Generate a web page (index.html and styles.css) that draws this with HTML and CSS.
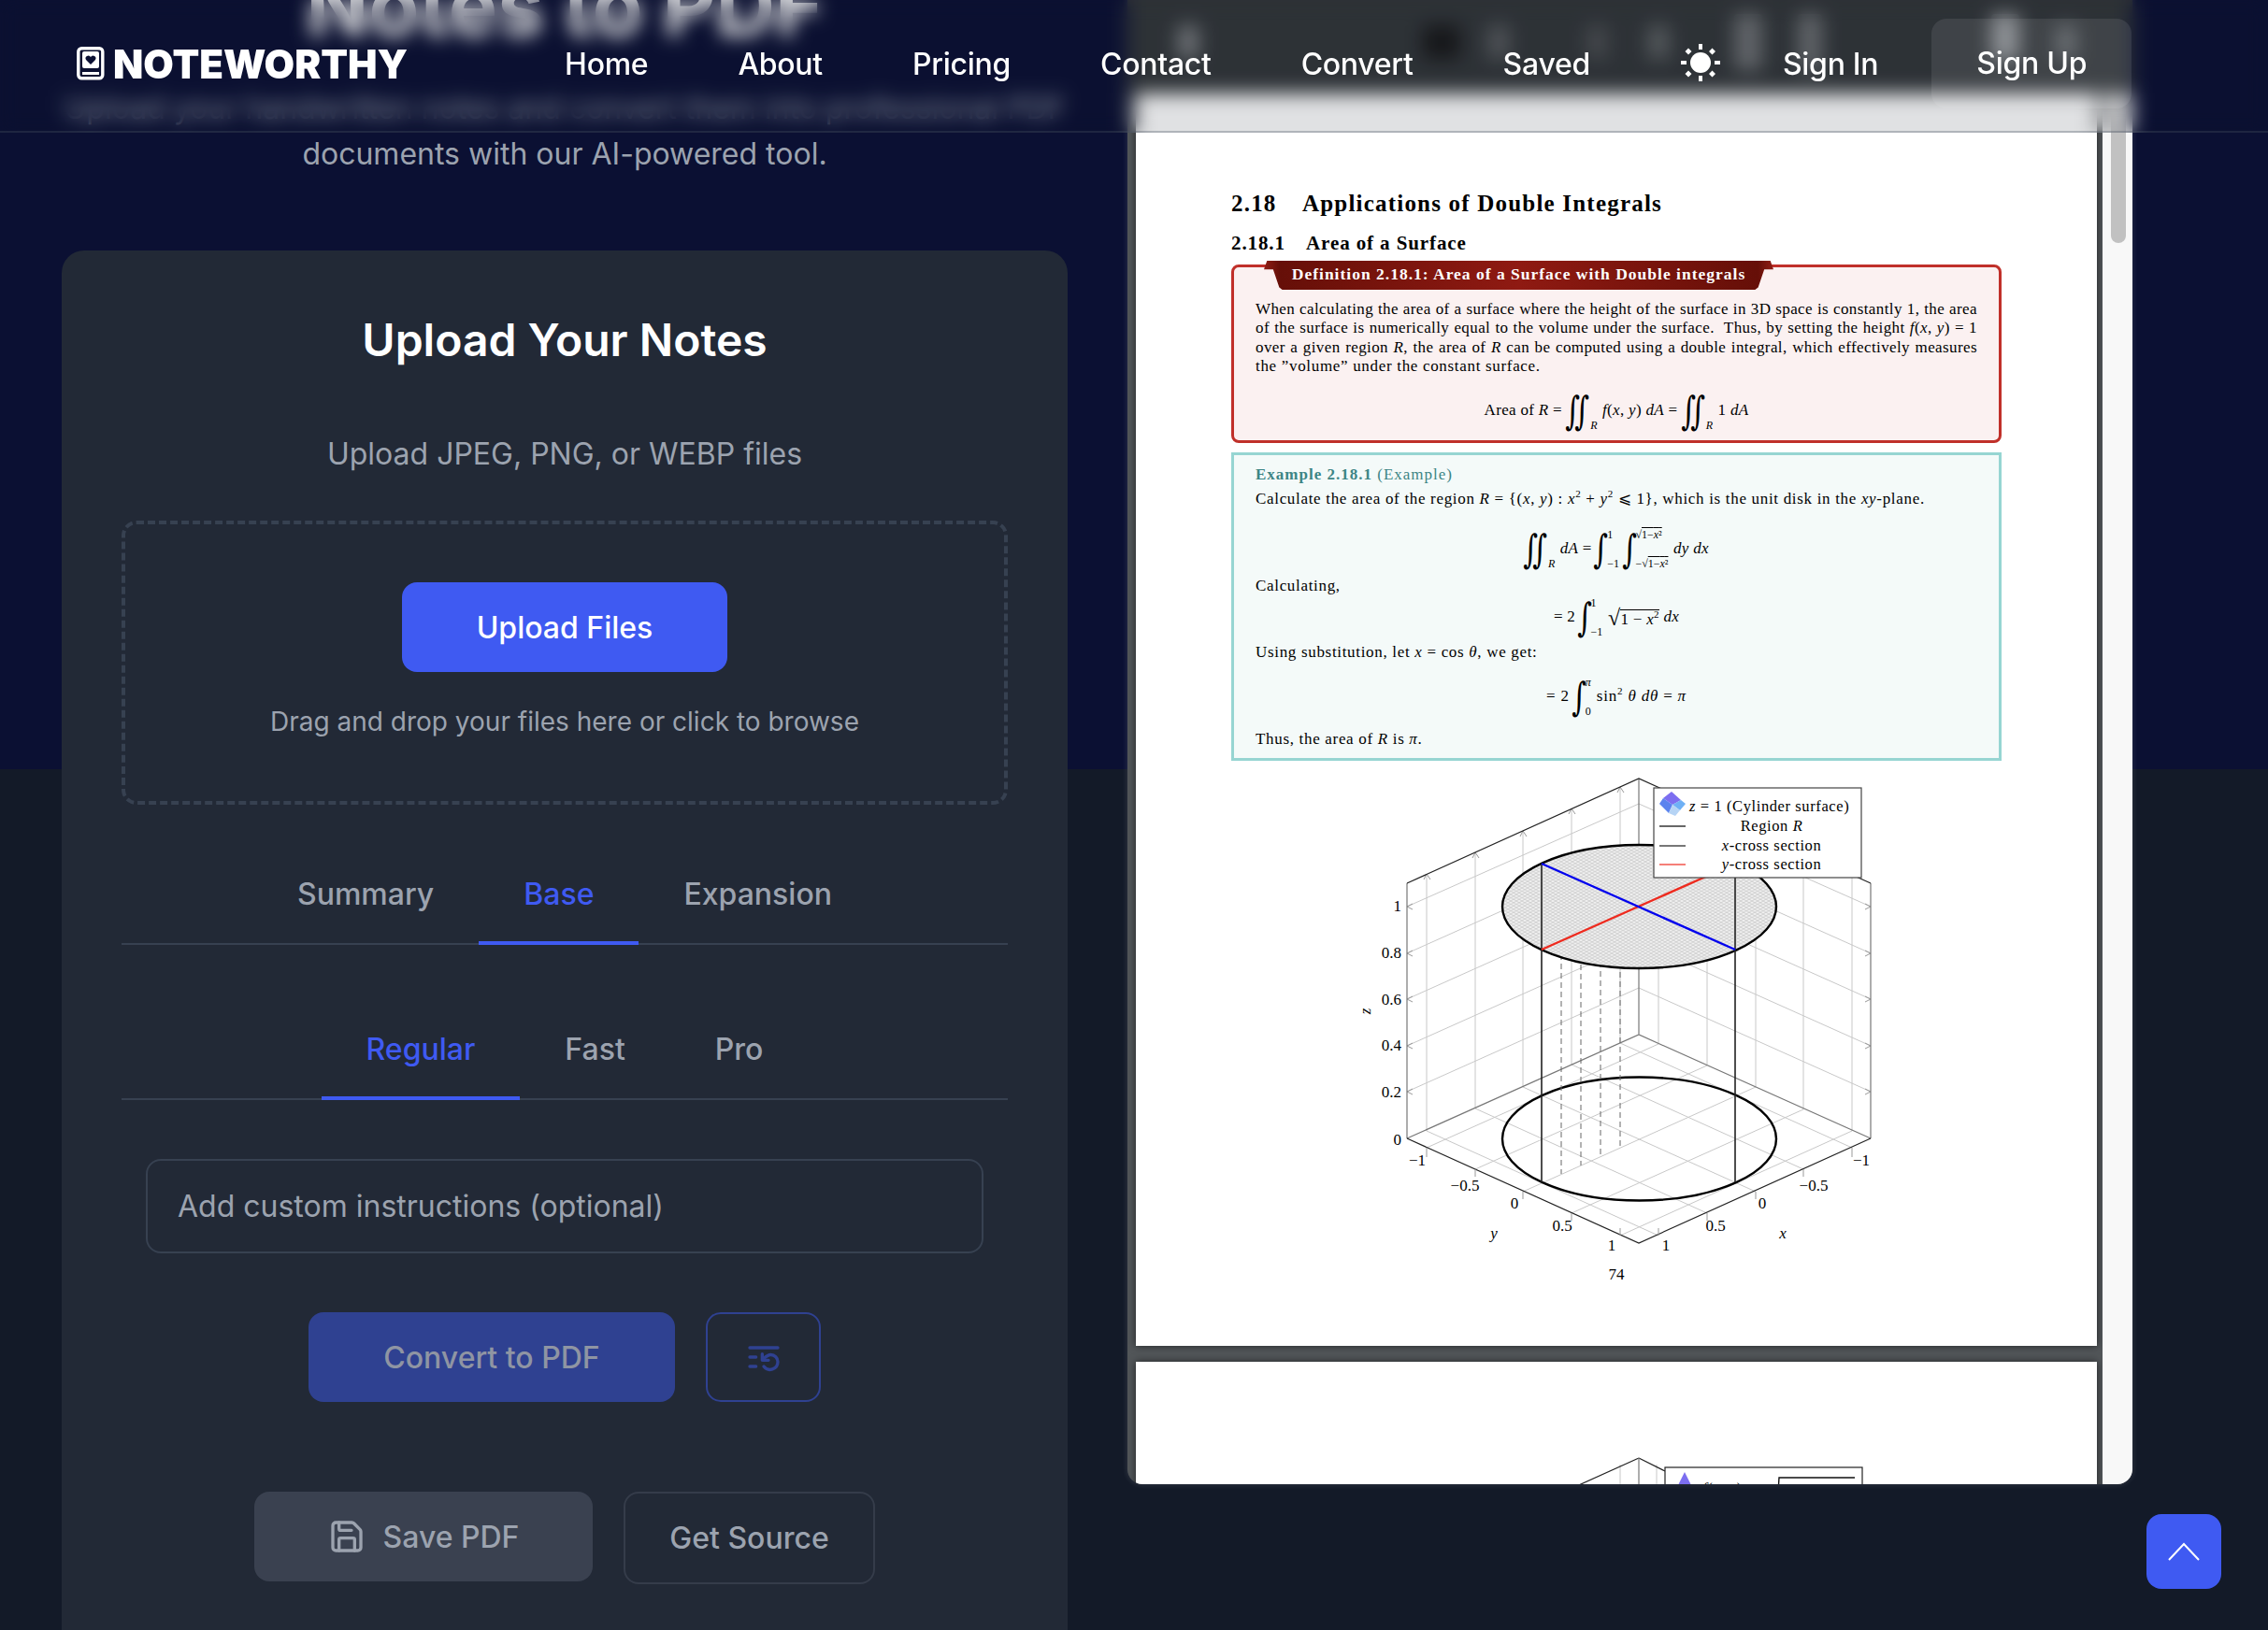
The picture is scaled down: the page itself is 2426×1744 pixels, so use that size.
FILE: index.html
```html
<!DOCTYPE html>
<html>
<head>
    <title>Noteworthy - Notes to PDF</title>
    <link rel="stylesheet" href="styles.css">
</head>
<body>
    <header class="topbar">
        <a class="logo">
            <svg class="logo-icon" viewBox="0 0 30 36">
                <rect x="1.8" y="1.8" width="26" height="32" rx="3.5" fill="none" stroke="#fff" stroke-width="3.4"/>
                <rect x="6" y="5" width="18" height="18" rx="2" fill="#fff"/>
                <path d="M15 19l-5-5a2.9 2.9 0 0 1 5-3 2.9 2.9 0 0 1 5 3z" fill="#0b1033"/>
                <rect x="6" y="27" width="18" height="3" fill="#fff"/>
            </svg>
            <span>NOTEWORTHY</span>
        </a>
        <nav class="nav">
            <a>Home</a>
            <a>About</a>
            <a>Pricing</a>
            <a>Contact</a>
            <a>Convert</a>
            <a>Saved</a>
            <svg class="sun" viewBox="0 0 44 44">
                <circle cx="22" cy="21" r="11" fill="#fff"/>
                <path d="M22 1v6M22 35v6M1 21h6M37 21h6" stroke="#fff" stroke-width="4"/>
                <path d="M9 5.500l3.500 3.500L9 12.500 5.500 9zM34.500 5.500L38 9l-3.500 3.500L31 9zM9 29.500l3.500 3.500L9 36.500 5.500 33zM34.500 29.500L38 33l-3.500 3.500L31 33z" fill="#fff"/>
            </svg>
            <a>Sign In</a>
            <a class="signup">Sign Up</a>
        </nav>
    </header>

    <main class="layout">
        <section class="left">
            <h1>Notes to PDF</h1>
            <p class="lead">Upload your handwritten notes and convert them into professional PDF<br>documents with our AI-powered tool.</p>

            <div class="card">
                <h2>Upload Your Notes</h2>
                <p class="card-sub">Upload JPEG, PNG, or WEBP files</p>

                <div class="dropzone">
                    <button class="btn btn-upload">Upload Files</button>
                    <p>Drag and drop your files here or click to browse</p>
                </div>

                <div class="tabs tabs-first">
                    <a>Summary</a>
                    <a class="active">Base</a>
                    <a>Expansion</a>
                </div>

                <div class="tabs tabs-second">
                    <a class="active">Regular</a>
                    <a>Fast</a>
                    <a>Pro</a>
                </div>

                <input class="custom" type="text" placeholder="Add custom instructions (optional)">

                <div class="actions actions-convert">
                    <button class="btn btn-convert">Convert to PDF</button>
                    <button class="btn btn-history">
                        <svg class="icon" viewBox="0 0 24 24">
                            <path d="M21 6H3"/><path d="M7 12H3"/><path d="M7 18H3"/>
                            <path d="M12 18a5 5 0 0 0 9-3 4.500 4.500 0 0 0-4.500-4.500c-1.660 0-3 1-4.500 2.500"/>
                            <path d="M11 10v4h4"/>
                        </svg>
                    </button>
                </div>

                <div class="actions actions-save">
                    <button class="btn btn-save">
                        <svg class="icon" viewBox="0 0 24 24">
                            <path d="M15.200 3a2 2 0 0 1 1.400.6l3.800 3.800a2 2 0 0 1 .6 1.400V19a2 2 0 0 1-2 2H5a2 2 0 0 1-2-2V5a2 2 0 0 1 2-2z"/>
                            <path d="M17 21v-7a1 1 0 0 0-1-1H8a1 1 0 0 0-1 1v7"/>
                            <path d="M7 3v4a1 1 0 0 0 1 1h7"/>
                        </svg>
                        Save PDF
                    </button>
                    <button class="btn btn-source">Get Source</button>
                </div>
            </div>
        </section>

        <section class="viewer">
            <div class="toolbar">
                <i class="tool tool-menu"></i>
                <i class="tool tool-input"></i>
                <i class="tool tool-a"></i>
                <i class="tool tool-b"></i>
                <i class="tool tool-c"></i>
                <i class="tool tool-d"></i>
                <i class="tool tool-e"></i>
                <i class="tool tool-f"></i>
                <i class="tool tool-g"></i>
            </div>
            <div class="viewer-body">
                <div class="pages">
                    <article class="pdf-page">
                        <h3 class="sec"><span>2.18</span>Applications of Double Integrals</h3>
                        <h4 class="subsec"><span>2.18.1</span>Area of a Surface</h4>

                        <div class="defbox">
                            <div class="deftab">Definition 2.18.1: Area of a Surface with Double integrals</div>
                            <p class="just">When calculating the area of a surface where the height of the surface in 3D space is constantly 1, the area</p>
                            <p class="just">of the surface is numerically equal to the volume under the surface.&nbsp; Thus, by setting the height <i>f</i>(<i>x</i>, <i>y</i>) = 1</p>
                            <p class="just">over a given region <i>R</i>, the area of <i>R</i> can be computed using a double integral, which effectively measures</p>
                            <p class="spaced">the ”volume” under the constant surface.</p>
                            <div class="formula f-def">
                                Area of <i>R</i> =
                                <span class="int">∬</span><span class="lim"><span></span><span><i>R</i></span></span>
                                <i>f</i>(<i>x</i>, <i>y</i>) <i>dA</i> =
                                <span class="int">∬</span><span class="lim"><span></span><span><i>R</i></span></span>
                                1 <i>dA</i>
                            </div>
                        </div>

                        <div class="exbox">
                            <p class="ex-head"><b>Example 2.18.1</b> (Example)</p>
                            <p class="ex-line spaced">Calculate the area of the region <i>R</i> = {(<i>x</i>, <i>y</i>) : <i>x</i><sup>2</sup> + <i>y</i><sup>2</sup> ⩽ 1}, which is the unit disk in the <i>xy</i>-plane.</p>
                            <div class="formula f-one">
                                <span class="int">∬</span><span class="lim"><span></span><span><i>R</i></span></span>
                                <i>dA</i> =
                                <span class="int">∫</span><span class="lim"><span>1</span><span>−1</span></span>
                                <span class="int">∫</span><span class="lim"><span>√<u>1−<i>x</i>²</u></span><span>−√<u>1−<i>x</i>²</u></span></span>
                                <i>dy dx</i>
                            </div>
                            <p class="spaced">Calculating,</p>
                            <div class="formula f-two">
                                = 2
                                <span class="int">∫</span><span class="lim"><span>1</span><span>−1</span></span>
                                <span class="root">√<span>1 − <i>x</i><sup>2</sup></span></span>
                                <i>dx</i>
                            </div>
                            <p class="ex-using spaced">Using substitution, let <i>x</i> = cos <i>θ</i>, we get:</p>
                            <div class="formula f-three">
                                = 2
                                <span class="int">∫</span><span class="lim"><span><i>π</i></span><span>0</span></span>
                                sin<sup>2</sup> <i>θ dθ</i> = <i>π</i>
                            </div>
                            <p class="ex-last spaced">Thus, the area of <i>R</i> is <i>π</i>.</p>
                        </div>

                        <svg class="chart" width="640" height="570" viewBox="0 10 640 570">
                            <defs>
                                <pattern id="mesh" width="6" height="3.500" patternUnits="userSpaceOnUse">
                                    <rect width="6" height="3.500" fill="#f0f0f0"/>
                                    <path d="M0 0l6 3.500M6 0L0 3.500" stroke="#b8b8b8" stroke-width=".6"/>
                                </pattern>
                            </defs>

                            <!-- grid -->
                            <path class="grid" d="M126 418L374 307M178 441L426 330M229 465L478 353M281 488L529 377M333 512L581 400
                                M374 512L126 400M426 488L178 376M478 465L229 353M529 441L281 329M581 418L333 306
                                M126 400V125M178 376V102M229 353V79M281 329V55M333 306V32
                                M374 306V32M426 329V55M478 353V79M529 377V102M581 400V125
                                M105 358L353 247L601 358M105 309L353 198L601 309M105 259L353 148L601 259M105 210L353 99L601 210M105 160L353 50L601 160"/>
                            <path class="ticks" d="M105 358l6-3M105 358l6 3M105 309l6-3M105 309l6 3M105 259l6-3M105 259l6 3M105 210l6-3M105 210l6 3M105 160l6-3M105 160l6 3
                                M601 358l-6-3M601 358l-6 3M601 309l-6-3M601 309l-6 3M601 259l-6-3M601 259l-6 3M601 210l-6-3M601 210l-6 3M601 160l-6-3M601 160l-6 3
                                M126 125l-3 6M126 125l4 6M178 102l-3 6M178 102l4 6M229 79l-3 6M229 79l4 6M281 55l-3 6M281 55l4 6M333 32l-3 6M333 32l4 6"/>
                            <path class="box-back" d="M105 408L353 297L601 408M353 297V23M105 135V408M601 135V408"/>
                            <path class="box-front" d="M105 135L353 23L601 135M105 408L353 520L601 408"/>
                            <path class="ticks" d="M126 418v10M178 441v8M229 465v8M281 488v8M333 512v-8M374 512v-8M426 488v8M478 465v8M529 441v8M581 418v10"/>

                            <!-- bottom circle and cylinder -->
                            <ellipse cx="353.500" cy="408.500" rx="146.500" ry="66" fill="none" stroke="#000" stroke-width="2.400"/>
                            <path class="dash" d="M270 211V446M291 202V437M312 189V428M333 170V418"/>
                            <ellipse cx="353.500" cy="160" rx="146.500" ry="66" fill="url(#mesh)" stroke="#000" stroke-width="2.400"/>
                            <path class="wall" d="M249 114V455M456 114V455"/>
                            <path d="M249 206L456 114" stroke="#ee2b1f" stroke-width="2.400"/>
                            <path d="M249 114L456 206" stroke="#0000ee" stroke-width="2.400"/>

                            <!-- axis numbers -->
                            <g class="axis">
                                <text x="99" y="165" text-anchor="end">1</text>
                                <text x="99" y="215" text-anchor="end">0.8</text>
                                <text x="99" y="265" text-anchor="end">0.6</text>
                                <text x="99" y="314" text-anchor="end">0.4</text>
                                <text x="99" y="364" text-anchor="end">0.2</text>
                                <text x="99" y="415" text-anchor="end">0</text>
                                <text x="116" y="437" text-anchor="middle">−1</text>
                                <text x="167" y="464" text-anchor="middle">−0.5</text>
                                <text x="220" y="483" text-anchor="middle">0</text>
                                <text x="271" y="507" text-anchor="middle">0.5</text>
                                <text x="324" y="528" text-anchor="middle">1</text>
                                <text x="382" y="528" text-anchor="middle">1</text>
                                <text x="435" y="507" text-anchor="middle">0.5</text>
                                <text x="485" y="483" text-anchor="middle">0</text>
                                <text x="540" y="464" text-anchor="middle">−0.5</text>
                                <text x="591" y="437" text-anchor="middle">−1</text>
                                <text x="198" y="515" text-anchor="middle" font-style="italic">y</text>
                                <text x="507" y="515" text-anchor="middle" font-style="italic">x</text>
                                <text x="63" y="275" text-anchor="middle" font-style="italic" transform="rotate(-90 63 272)">z</text>
                                <text x="329" y="559" text-anchor="middle">74</text>
                            </g>

                            <!-- legend -->
                            <rect x="369" y="33" width="222" height="96" fill="#fff" stroke="#444" stroke-width="1.200"/>
                            <path d="M388 37l10 9-9 5-10-7z" fill="#7c6ef0"/>
                            <path d="M379 44l10 7-4 9-10-10z" fill="#5b83ee"/>
                            <path d="M398 46l5 4-6 7-8-6z" fill="#6fb1f5"/>
                            <path d="M389 51l8 6-5 6-7-3z" fill="#b6d4f5"/>
                            <path d="M375 74h28" stroke="#000" stroke-width="1.200"/>
                            <path d="M375 95h28" stroke="#555" stroke-width="1.600"/>
                            <path d="M375 115h28" stroke="#ee2b1f" stroke-width="1.200"/>
                            <g class="legend">
                                <text x="407" y="58"><tspan font-style="italic">z</tspan> = 1 (Cylinder surface)</text>
                                <text x="495" y="79" text-anchor="middle">Region <tspan font-style="italic">R</tspan></text>
                                <text x="495" y="100" text-anchor="middle"><tspan font-style="italic">x</tspan>-cross section</text>
                                <text x="495" y="120" text-anchor="middle"><tspan font-style="italic">y</tspan>-cross section</text>
                            </g>
                        </svg>
                    </article>

                    <article class="pdf-page pdf-page-next">
                        <svg width="1028" height="140" viewBox="0 0 1028 140">
                            <path class="grid" d="M518 110V140M557 110V140"/>
                            <path class="box-front" d="M538 103L456 140M538 103L566 117"/>
                            <path class="box-back" d="M538 103V140"/>
                            <rect x="566" y="113" width="211" height="40" fill="#fff" stroke="#222" stroke-width="1.200"/>
                            <path d="M587 118l7 14-7 8-7-8z" fill="#7c6ef0"/>
                            <path d="M594 132l7 4-6 4z" fill="#6fb1f5"/>
                            <text class="legend" x="606" y="141"><tspan font-style="italic">f</tspan>(<tspan font-style="italic">x</tspan>, <tspan font-style="italic">y</tspan>)</text>
                            <path d="M687 140l1-16h81" fill="none" stroke="#111" stroke-width="1.400"/>
                        </svg>
                    </article>
                </div>
                <div class="scrollbar"><div class="thumb"></div></div>
            </div>
        </section>
    </main>

    <a class="to-top">
        <svg width="36" height="20" viewBox="0 0 36 20"><path d="M2 19L18 2l16 17" fill="none" stroke="#fff" stroke-width="2"/></svg>
    </a>
</body>
</html>
```

FILE: styles.css
```css
* {
    margin: 0;
    padding: 0;
    box-sizing: border-box;
}

html,
body {
    height: 100%;
    overflow: hidden;
}

body {
    font-family: Inter, "Noto Sans", sans-serif;
    color: #fff;
    background: linear-gradient(#0b1033 823px, #131a28 823px);
}

button {
    font-family: inherit;
    border: none;
}

/* Header */
.topbar {
    position: fixed;
    top: 0;
    left: 0;
    right: 0;
    z-index: 10;
    height: 142px;
    padding: 0 0 4px 82px;
    display: flex;
    align-items: center;
    background-color: rgba(17, 24, 39, 0.13);
    border-bottom: 2px solid rgba(75, 85, 99, 0.32);
    backdrop-filter: blur(10px);
}

.logo {
    display: flex;
    align-items: center;
    gap: 9px;
    font-size: 42px;
    font-weight: 900;
}

.logo-icon {
    width: 30px;
    height: 36px;
}

.nav {
    display: flex;
    align-items: center;
    margin-left: 120px;
    font-size: 32px;
    font-weight: 500;
    letter-spacing: -0.28px;
}

.nav a {
    padding: 0 48px;
}

.sun {
    width: 44px;
    height: 44px;
    margin: 0 18px 0 48px;
}

.nav .signup {
    margin-left: 9px;
    height: 96px;
    line-height: 96px;
    border-radius: 16px;
    background-color: rgba(255, 255, 255, 0.09);
}

/* Page columns */
.layout {
    margin: -42px 0 0 66px;
    display: grid;
    grid-template-columns: 1076px 1075px;
    gap: 64px;
    align-items: start;
}

.left {
    text-align: center;
}

h1 {
    font-size: 88px;
    font-weight: 700;
    line-height: 96px;
    color: #fff;
}

.lead {
    margin-top: 37px;
    font-size: 32px;
    line-height: 49px;
    color: #9ca3af;
    white-space: nowrap;
}

/* Upload card */
.card {
    margin-top: 79px;
    padding: 60px 64px 120px;
    border-radius: 24px;
    background-color: #222936;
}

h2 {
    font-size: 48px;
    font-weight: 600;
    line-height: 72px;
}

.card-sub {
    margin-top: 62px;
    font-size: 32px;
    line-height: 48px;
    color: #9ca3af;
}

.dropzone {
    margin-top: 47px;
    height: 304px;
    padding-top: 62px;
    border: 4px dashed #374151;
    border-radius: 16px;
    display: flex;
    flex-direction: column;
    align-items: center;
}

.dropzone p {
    margin-top: 33px;
    font-size: 28px;
    line-height: 40px;
    color: #9ca3af;
}

.btn {
    height: 96px;
    border-radius: 16px;
    font-size: 32px;
    font-weight: 500;
    display: flex;
    align-items: center;
    justify-content: center;
}

.btn-upload {
    width: 348px;
    background-color: #3f5af2;
    color: #fff;
}

.tabs {
    display: flex;
    justify-content: center;
    border-bottom: 2px solid #374151;
    font-size: 32px;
    font-weight: 500;
    line-height: 48px;
    color: #9ca3af;
}

.tabs a {
    padding: 0 48px 26px;
    margin-bottom: -2px;
    border-bottom: 4px solid transparent;
}

.tabs .active {
    color: #3f5af2;
    border-bottom-color: #3f5af2;
}

.tabs-first {
    margin-top: 72px;
}

.tabs-second {
    margin-top: 88px;
}

.custom {
    display: block;
    width: 896px;
    height: 101px;
    margin: 63px 0 0 26px;
    padding: 0 32px;
    font-family: inherit;
    font-size: 32px;
    color: #fff;
    background-color: transparent;
    border: 2px solid #374151;
    border-radius: 16px;
}

.custom::placeholder {
    color: #9ca3af;
    opacity: 1;
}

.actions {
    display: flex;
    justify-content: center;
    align-items: flex-start;
    gap: 33px;
}

.actions-convert {
    margin-top: 63px;
}

.actions-save {
    margin-top: 96px;
}

.btn-convert {
    width: 392px;
    background-color: #2f4191;
    color: #8f95a3;
}

.btn-history {
    width: 123px;
    background-color: transparent;
    color: #2f4191;
    border: 2px solid #2f4191;
}

.btn-save {
    width: 362px;
    gap: 19px;
    background-color: #3a4150;
    color: #9ca3af;
}

.btn-source {
    width: 269px;
    height: 99px;
    background-color: transparent;
    color: #9ca3af;
    border: 2px solid #353c4a;
}

.icon {
    width: 40px;
    height: 40px;
    fill: none;
    stroke: currentColor;
    stroke-width: 2;
    stroke-linecap: round;
    stroke-linejoin: round;
}

/* PDF viewer */
.viewer {
    height: 1630px;
    overflow: hidden;
    border-radius: 0 0 16px 16px;
    background-color: #525659;
    box-shadow: 0 0 6px rgba(255, 255, 255, 0.15);
    display: flex;
    flex-direction: column;
}

.toolbar {
    height: 142px;
    flex-shrink: 0;
    padding-top: 69px;
    background-color: #323639;
    display: flex;
    align-items: flex-start;
}

.tool {
    display: block;
    width: 22px;
    height: 36px;
    border-radius: 4px;
    background-color: #e8eaed;
    opacity: 0.4;
}

.tool-menu { margin-left: 54px; }
.tool-input { margin-left: 240px; width: 40px; background-color: #111; opacity: 0.8; }
.tool-a { margin-left: 30px; opacity: 0.22; }
.tool-b { margin-left: 83px; opacity: 0.15; }
.tool-c { margin-left: 44px; opacity: 0.25; }
.tool-d { margin-left: 70px; width: 30px; height: 60px; margin-top: -12px; opacity: 0.32; }
.tool-e { margin-left: 38px; width: 26px; height: 60px; margin-top: -12px; opacity: 0.32; }
.tool-f { margin-left: 181px; width: 30px; height: 50px; margin-top: -12px; opacity: 0.55; }
.tool-g { margin-left: 39px; opacity: 0.3; }

.viewer-body {
    flex: 1;
    min-height: 0;
    display: flex;
}

.pages {
    flex: 1;
    min-width: 0;
    padding: 0 6px 0 9px;
    overflow: hidden;
}

.scrollbar {
    width: 32px;
    flex-shrink: 0;
    padding: 0 7px 0 9px;
    background-color: #f8f8f8;
}

.thumb {
    height: 160px;
    border-radius: 0 0 8px 8px;
    background-color: #c1c1c1;
}

.pdf-page {
    height: 1340px;
    padding: 103px 102px 0;
    background-color: #fff;
    color: #000;
    font-family: "Liberation Serif", serif;
    font-size: 17px;
    line-height: 20px;
    box-shadow: 0 0 8px rgba(0, 0, 0, 0.6);
}

.pdf-page-next {
    height: 200px;
    margin-top: 17px;
    padding: 0;
}

.pdf-page-next svg {
    display: block;
}

.sec {
    font-size: 25px;
    font-weight: 700;
    line-height: 30px;
    letter-spacing: 1.2px;
}

.sec span {
    display: inline-block;
    width: 76px;
}

.subsec {
    margin-top: 14px;
    font-size: 21px;
    font-weight: 700;
    line-height: 26px;
    letter-spacing: 0.9px;
}

.subsec span {
    display: inline-block;
    width: 80px;
}

/* Definition and example boxes */
.defbox {
    position: relative;
    height: 191px;
    margin-top: 10px;
    padding: 35px 23px 0;
    background-color: #fbf1f1;
    border: 3px solid #c0302a;
    border-radius: 8px;
}

.deftab {
    position: absolute;
    top: -7px;
    left: 32px;
    width: 545px;
    height: 31px;
    padding-top: 4px;
    text-align: center;
    font-weight: 700;
    font-size: 17.500px;
    letter-spacing: 1px;
    color: #fff;
    background: linear-gradient(90deg, #8f1f16, #660f08 3%, #8f1a12 50%, #660f08 97%, #8f1f16);
    clip-path: polygon(0 30%, 0.6% 0, 99.4% 0, 100% 30%, 98.200% 30%, 97% 92%, 96.400% 100%, 3.600% 100%, 3% 92%, 1.800% 30%);
}

.just {
    text-align: justify;
    text-align-last: justify;
    letter-spacing: 0.4px;
}

.spaced {
    letter-spacing: 0.68px;
}

.defbox p {
    line-height: 20.400px;
}

.formula {
    text-align: center;
    white-space: nowrap;
    letter-spacing: 0.3px;
}

.int {
    display: inline-block;
    vertical-align: middle;
    font-family: "DejaVu Serif", serif;
    font-size: 42px;
    line-height: 44px;
    letter-spacing: -6px;
    margin: 0 -1px 0 -5px;
    transform: scaleX(0.72);
}

.lim {
    display: inline-flex;
    flex-direction: column;
    justify-content: space-between;
    vertical-align: middle;
    height: 44px;
    margin: 0 1px 0 2px;
    font-size: 12px;
    line-height: 13px;
    text-align: left;
    letter-spacing: 0;
}

.lim u {
    text-decoration: overline;
}

.root {
    display: inline-flex;
    vertical-align: middle;
    font-size: 24px;
    line-height: 24px;
}

.root span {
    font-size: 17px;
    border-top: 1px solid #000;
    line-height: 20px;
    margin-top: 3px;
}

.f-def {
    margin-top: 15px;
    height: 40px;
    line-height: 40px;
}

.exbox {
    height: 330px;
    margin-top: 10px;
    padding: 11px 23px 0;
    background-color: #f4faf9;
    border: 3px solid #96d5d2;
}

.ex-head {
    color: #3d8585;
    letter-spacing: 1px;
}

.ex-line {
    margin-top: 6px;
    white-space: nowrap;
}

sup {
    font-size: 11px;
    line-height: 0;
}

.f-one {
    margin-top: 13px;
    height: 60px;
    line-height: 60px;
}

.f-two {
    margin-top: 2px;
    height: 40px;
    line-height: 40px;
}

.ex-using {
    margin-top: 9px;
}

.f-three {
    margin-top: 12px;
    height: 50px;
    line-height: 50px;
    letter-spacing: 0.8px;
}

.ex-last {
    margin-top: 11px;
}

/* 3D plot */
.chart {
    display: block;
    margin: 6px 0 0 83px;
    overflow: visible;
}

.grid {
    fill: none;
    stroke: #c8c8c8;
    stroke-width: 1;
}

.ticks {
    fill: none;
    stroke: #999;
    stroke-width: 1;
}

.box-back {
    fill: none;
    stroke: #777;
    stroke-width: 1.200;
}

.box-front {
    fill: none;
    stroke: #222;
    stroke-width: 1.200;
}

.dash {
    fill: none;
    stroke: #666;
    stroke-width: 1;
    stroke-dasharray: 6 4;
}

.wall {
    fill: none;
    stroke: #222;
    stroke-width: 1.600;
}

.axis text {
    font-size: 17px;
}

.legend,
.legend text {
    font-size: 16.500px;
    letter-spacing: 0.6px;
}

/* Back to top */
.to-top {
    position: fixed;
    top: 1620px;
    left: 2296px;
    z-index: 5;
    width: 80px;
    height: 80px;
    border-radius: 16px;
    background-color: #3f5af2;
    display: flex;
    align-items: center;
    justify-content: center;
}
```
